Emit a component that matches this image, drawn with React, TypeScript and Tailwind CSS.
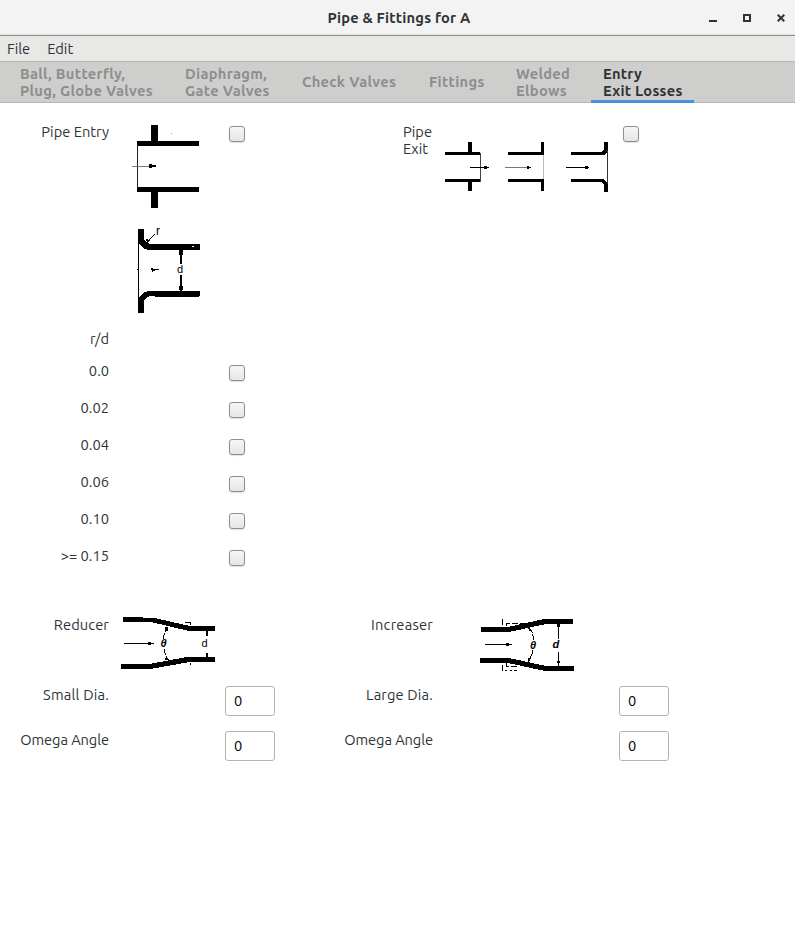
import type { ReactNode } from "react";

function Checkbox() {
  return (
    <button
      role="checkbox"
      aria-checked="false"
      className="block size-4 rounded-[3px] border border-[#8e8e88] bg-linear-to-b from-[#f6f6f6] to-[#e6e6e4] shadow-[0_1px_1px_rgba(0,0,0,0.12)]"
    />
  );
}

function NumberEntry() {
  return (
    <input
      defaultValue="0"
      className="block h-[30px] w-[50px] rounded-[3px] border border-[#b4b4b2] bg-white px-2 pb-[2px] text-[14.667px] text-black outline-none"
    />
  );
}

function Label({ children, className = "" }: { children: ReactNode; className?: string }) {
  return <span className={`text-right whitespace-nowrap ${className}`}>{children}</span>;
}

const diaText = { fontFamily: "Liberation Sans, sans-serif" };

function PipeEntryDrawing() {
  return (
    <svg width="72" height="90" viewBox="130 121 72 90" shapeRendering="crispEdges">
      <path d="M151 125h7v16h-7zM137 141h62v5h-62zM137 187h62v5h-62zM151 191h7v17h-7z" />
      <path d="M137.500 145v43" stroke="#222" />
      <path d="M132 166h17v1h-17z" fill="#777" />
      <path d="M149 164h3v1h4v2h-4v1h-3z" />
      <path d="M171 133h1v1h-1z" fill="#999" />
    </svg>
  );
}

function RoundedEntryDrawing() {
  return (
    <svg width="72" height="90" viewBox="130 227 72 90" shapeRendering="crispEdges" className="overflow-visible">
      <path d="M138 229h6v11l3 3 4 1h49v6h-52l-5-2-5-6zM138 313h6v-13l3-3 4-1h49v-5h-52l-5 2-5 6z" />
      <path d="M138.500 238v65" stroke="#000" />
      <path d="M137 269h2v1h-2zM151 268h2v1h6v1h-4v1h-2v1h-1v-2h-1z" />
      <path d="M181 250v14M181 275v16" stroke="#000" strokeWidth="2" />
      <path d="M155 234l-7 7" stroke="#000" fill="none" />
      <path d="M179 250h4v5h-4zM179 286h4v4h-4zM146 239l4 1-3 3z" />
      <path d="M192 246h2v1h-2z" fill="#fff" />
      <path d="M155 295h44v1.500h-44z" />
      <text x="156" y="235" fontSize="12" style={diaText}>r</text>
      <text x="177" y="273" fontSize="11" style={diaText}>d</text>
    </svg>
  );
}

function PipeExitDrawing() {
  return (
    <svg width="168" height="54" viewBox="443 140 168 54" shapeRendering="crispEdges">
      <path d="M445 152h35v3h-35zM445 179h35v3h-35zM468 142h4v11h-4zM468 181h4v10h-4z" />
      <path d="M480.500 153v29" stroke="#444" />
      <path d="M470 167.500h15" stroke="#000" />
      <path d="M484 166h3v1h2v1h-2v1h-3z" />
      <path d="M508 152h36v3h-36zM508 179h36v3h-36zM541 142h3v11h-3zM541 181h3v10h-3z" />
      <path d="M543.500 155v24" stroke="#bbb" />
      <path d="M505 167.500h23" stroke="#777" />
      <path d="M527 166h2v1h2v1h-2v1h-2z" />
      <path d="M571 152h30l3-2v-8h4v9l-4 4h-33zM571 182h30l3 3v7h4v-8l-5-5h-32z" />
      <path d="M607.500 150v34" stroke="#333" />
      <path d="M566 167.500h20" stroke="#000" />
      <path d="M585 166h3v1h1v1h-1v1h-3z" />
    </svg>
  );
}

function ReducerDrawing() {
  return (
    <svg width="96" height="56" viewBox="120 615 96 56" shapeRendering="crispEdges">
      <path d="M123 617h20v1h12l17 4 18 4h25v5h-26l-38-9h-28zM121 664h28l38-7h28v5h-25l-40 7h-29z" />
      <path d="M124 643.500h26" stroke="#000" />
      <path d="M148 642h3v1h3v1h-3v1h-3z" />
      <path d="M167.500 627q-4 6-4 13M164.500 649q0 7 4 11" stroke="#000" strokeDasharray="6 1" fill="none" />
      <path d="M165 627h3v4h-3zM166 656l3 4h-4zM185 622h5v1h-5zM190 622h1v3h-1zM190 663h1v2h-1z" />
      <path d="M207 631v5M207 653v5" stroke="#000" strokeWidth="2" />
      <text x="160.500" y="647" fontSize="11" fontStyle="italic" fontWeight="bold" style={diaText}>θ</text>
      <text x="201.500" y="647" fontSize="11" style={diaText}>d</text>
    </svg>
  );
}

function IncreaserDrawing() {
  return (
    <svg width="96" height="56" viewBox="479 616 96 56" shapeRendering="crispEdges">
      <path d="M481 627h27l36-8h29v5h-27l-37 8h-28zM480 658h29l37 8h28v5h-29l-37-8h-28z" />
      <path d="M485 644.500h22" stroke="#000" />
      <path d="M506 643h3v1h3v1h-3v1h-3z" />
      <path d="M502.500 619v6M506.500 626v-2.500h18M502.500 665v5.500h4M510 670.500h2M514 670.500h3M506.500 662v4h12" stroke="#000" fill="none" strokeDasharray="6 2" />
      <path d="M529.500 628q4 5 4 12M533 650q-1 6-5 12" stroke="#000" fill="none" strokeDasharray="6 1" />
      <path d="M528 627l3 4h-2zM528 658h3l-2 4h-1z" />
      <path d="M558.500 624v15M558.500 652v14" stroke="#000" strokeWidth="1.300" />
      <path d="M557 624h3v3h-3zM557 661h3l-1 4h-1z" />
      <text x="530" y="649" fontSize="11" fontStyle="italic" fontWeight="bold" style={diaText}>θ</text>
      <text x="552.500" y="648" fontSize="11" fontStyle="italic" fontWeight="bold" style={diaText}>d</text>
    </svg>
  );
}

const tabs = [
  { lines: ["Ball, Butterfly,", "Plug, Globe Valves"], box: "w-[157px]" },
  { lines: ["Diaphragm,", "Gate Valves"], box: "w-[109px]" },
  { lines: ["Check Valves"], box: "w-[119px]" },
  { lines: ["Fittings"], box: "w-[79px]" },
  { lines: ["Welded", "Elbows"], box: "w-[79px]" },
  { lines: ["Entry", "Exit Losses"], box: "w-[103px]", active: true },
];

const ratios = ["0.0", "0.02", "0.04", "0.06", "0.10", ">= 0.15"];

const row = "grid grid-cols-[109px_116px_50px_158px_186px_50px] items-start";

export default function App() {
  return (
    <div className="flex h-[926px] w-[795px] flex-col overflow-hidden bg-white font-['Ubuntu','Noto_Sans',sans-serif] text-[14.667px] leading-[17px] text-[#2e3436]">
      <header className="grid h-9 grid-cols-[1fr_auto_1fr] items-center border-b border-[#8e8e86] bg-[#f3f3f3] shadow-[inset_0_-1px_0_#e2e2e0]">
        <span />
        <h1 className="pl-[3px] font-bold tracking-[0.2px]">Pipe &amp; Fittings for A</h1>
        <div className="flex items-center justify-end gap-[26px] pr-[10px]">
          <svg width="8" height="8" shapeRendering="crispEdges"><path d="M0 6h8v2H0z" fill="#2e3436" /></svg>
          <svg width="8" height="8" shapeRendering="crispEdges"><path d="M1 1h6v6H1z" fill="none" stroke="#2e3436" strokeWidth="2" /></svg>
          <svg width="8" height="8"><path d="M.7.7l6.600 6.600M7.300.7L.7 7.300" stroke="#2e3436" strokeWidth="2" /></svg>
        </div>
      </header>
      <nav className="flex h-[26px] items-center gap-[17px] border-b border-[#b6b6b3] bg-[#e8e8e6] px-[7px] pb-[1px]">
        <span>File</span>
        <span>Edit</span>
      </nav>
      <div className="flex h-[41px] gap-2 border-b border-[#b6b6b3] bg-[#cececc] pl-2 font-bold tracking-[0.32px]">
        {tabs.map((tab) => (
          <div
            key={tab.lines[0]}
            className={`flex h-[41px] flex-col justify-center px-3 whitespace-nowrap ${tab.box} ${
              tab.active ? "border-b-[3px] border-[#4a90d9] pt-[1px] tracking-[0.25px]" : "pb-[2px] text-[#8b8e8f]"
            }`}
          >
            {tab.lines.map((line) => (
              <span key={line}>{line}</span>
            ))}
          </div>
        ))}
      </div>
      <main className="flex flex-1 flex-col pt-[18px]">
        <div className={`${row} h-[106px]`}>
          <Label className="pt-[2px]">Pipe Entry</Label>
          <div className="pl-[21px]"><PipeEntryDrawing /></div>
          <div className="pt-[5px] pl-1"><Checkbox /></div>
          <div className="pt-[2px] pl-[128px]">Pipe<br />Exit</div>
          <div className="pt-[19px] pl-[10px]"><PipeExitDrawing /></div>
          <div className="pt-[5px] pl-1"><Checkbox /></div>
        </div>
        <div className={`${row} h-[103px]`}>
          <span />
          <div className="pl-[21px]"><RoundedEntryDrawing /></div>
        </div>
        <div className={`${row} h-[32px]`}>
          <Label>r/d</Label>
        </div>
        {ratios.map((ratio) => (
          <div key={ratio} className={`${row} h-[37px]`}>
            <Label>{ratio}</Label>
            <span />
            <div className="pt-[3px] pl-1"><Checkbox /></div>
          </div>
        ))}
        <div className={`${row} mt-[31px] h-[71px]`}>
          <Label className="pt-[1px] tracking-[0.1px]">Reducer</Label>
          <div className="pl-[11px]"><ReducerDrawing /></div>
          <span />
          <Label className="pt-[1px] tracking-[0.2px]">Increaser</Label>
          <div className="pt-[1px] pl-[46px]"><IncreaserDrawing /></div>
        </div>
        {["Small Dia.", "Omega Angle"].map((name, i) => (
          <div key={name} className={`${row} h-[45px]`}>
            <Label className={i === 0 ? "tracking-[0.2px]" : "tracking-[-0.08px]"}>{name}</Label>
            <span />
            <NumberEntry />
            <Label className={i === 0 ? "tracking-[0.15px]" : "tracking-[-0.08px]"}>{i === 0 ? "Large Dia." : name}</Label>
            <span />
            <NumberEntry />
          </div>
        ))}
      </main>
    </div>
  );
}
